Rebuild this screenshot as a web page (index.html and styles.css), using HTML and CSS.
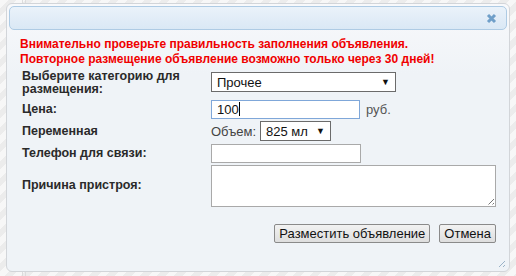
FILE: index.html
```html
<!DOCTYPE html>
<html lang="ru">
<head>
<meta charset="utf-8">
<link rel="stylesheet" href="styles.css">
</head>
<body>
<div class="page">
  <div class="dialog">
    <div class="titlebar">
      <span class="close">
        <svg width="11" height="11" viewBox="0 0 11 11"><path d="M2 2 L9 9 M9 2 L2 9" stroke="#6f9fc9" stroke-width="3" stroke-linecap="butt"/></svg>
      </span>
    </div>
    <div class="content">
      <div class="warn">Внимательно проверьте правильность заполнения объявления.<br>Повторное размещение объявление возможно только через 30 дней!</div>
      <div class="form">
        <div class="label two">Выберите категорию для размещения:</div>
        <div class="field first"><div class="select wide"><span>Прочее</span><span class="arrow">▼</span></div></div>

        <div class="label">Цена:</div>
        <div class="field"><div class="input focus">100<span class="caret"></span></div><span class="unit">руб.</span></div>

        <div class="label">Переменная</div>
        <div class="field"><span class="sub">Объем:</span><div class="select small"><span>825 мл</span><span class="arrow">▼</span></div></div>

        <div class="label">Телефон для связи:</div>
        <div class="field"><div class="input"></div></div>

        <div class="label">Причина пристроя:</div>
        <div class="field"><div class="textarea"><span class="grip"></span></div></div>
      </div>
      <div class="buttons">
        <button class="btn">Разместить объявление</button>
        <button class="btn">Отмена</button>
      </div>
    </div>
    <span class="resize"></span>
  </div>
</div>
</body>
</html>
```
FILE: styles.css
```css
html, body {
  margin: 0;
  padding: 0;
}
body {
  width: 516px;
  height: 276px;
  overflow: hidden;
  font-family: "Liberation Sans", Arial, sans-serif;
  background:
    linear-gradient(90deg, transparent 22px, #dcdcdc 22px, #dcdcdc 23px, transparent 23px, transparent 25px, #dcdcdc 25px, #dcdcdc 26px, transparent 26px),
    repeating-linear-gradient(135deg, #f7f7f7 0 6px, #ececec 6px 12px);
}
.page {
  padding: 3px 6px 0 6px;
}
.dialog {
  position: relative;
  box-sizing: border-box;
  width: 504px;
  height: 269px;
  border: 1px solid #d2d5d9;
  border-radius: 6px;
  background: linear-gradient(#f8f9fb 0, #eff3f7 70px, #eff3f7 100%);
  padding: 2px;
}
.titlebar {
  box-sizing: border-box;
  height: 24px;
  border: 1px solid #aecbe4;
  border-radius: 5px;
  background: linear-gradient(#eaf2fa, #dae8f5);
  display: flex;
  justify-content: flex-end;
  align-items: center;
  padding-right: 9px;
}
.close {
  display: flex;
  width: 11px;
  height: 11px;
}
.content {
  padding: 7px 0 0 11px;
}
.warn {
  color: #f00000;
  font-weight: bold;
  font-size: 12px;
  line-height: 15px;
}
.form {
  margin-top: 3px;
  display: grid;
  grid-template-columns: 189px 1fr;
  grid-template-rows: 27px 18px 20px 18px 41px;
  row-gap: 3px;
  padding-left: 2px;
}
.label {
  color: #2a2a2a;
  font-weight: bold;
  font-size: 12.5px;
  line-height: 13px;
  display: flex;
  align-items: center;
}
.label.two {
  align-items: flex-start;
  padding-right: 20px;
}
.field {
  display: flex;
  align-items: center;
  gap: 6px;
  font-size: 13px;
  color: #111;
}
.field.first {
  align-items: flex-start;
  padding-top: 2px;
}
.select {
  box-sizing: border-box;
  height: 20px;
  border: 1px solid #6b6b6b;
  background: #fff;
  display: flex;
  align-items: center;
  justify-content: space-between;
  padding: 0 5px 0 5px;
  font-size: 13px;
  color: #111;
}
.select.wide { width: 185px; }
.select.small { width: 71px; margin-left: -1px; }
.arrow {
  font-size: 9px;
  color: #111;
}
.input {
  box-sizing: border-box;
  width: 150px;
  height: 19px;
  border: 1px solid #a9a9a9;
  background: #fff;
  font-size: 13px;
  line-height: 17px;
  padding-left: 5px;
  display: flex;
  align-items: center;
}
.input.focus {
  border-color: #7fa7d9;
  width: 149px;
}
.caret {
  display: inline-block;
  width: 1px;
  height: 14px;
  background: #000;
}
.unit {
  color: #555;
  font-size: 13px;
}
.sub {
  color: #444;
  font-size: 13px;
  margin-right: -1px;
}
.textarea {
  position: relative;
  box-sizing: border-box;
  width: 285px;
  height: 42px;
  border: 1px solid #a9a9a9;
  background: #fff;
}
.grip {
  position: absolute;
  right: 1px;
  bottom: 1px;
  width: 7px;
  height: 7px;
  background: repeating-linear-gradient(135deg, transparent 0 2px, #777 2px 3px);
  clip-path: polygon(100% 0, 100% 100%, 0 100%);
}
.buttons {
  display: flex;
  justify-content: flex-end;
  gap: 9px;
  margin-top: 18px;
  padding-right: 11px;
}
.btn {
  box-sizing: border-box;
  height: 19px;
  padding: 0 4px;
  font-family: "Liberation Sans", Arial, sans-serif;
  font-size: 13px;
  color: #111;
  border: 1px solid #8a8a8a;
  border-radius: 2px;
  background: linear-gradient(#f2f2f2, #dedede);
  line-height: 17px;
}
.resize {
  position: absolute;
  right: 4px;
  bottom: 4px;
  width: 9px;
  height: 9px;
  background: repeating-linear-gradient(135deg, transparent 0 2px, #9bb3c8 2px 3px);
  clip-path: polygon(100% 0, 100% 100%, 0 100%);
}
```
